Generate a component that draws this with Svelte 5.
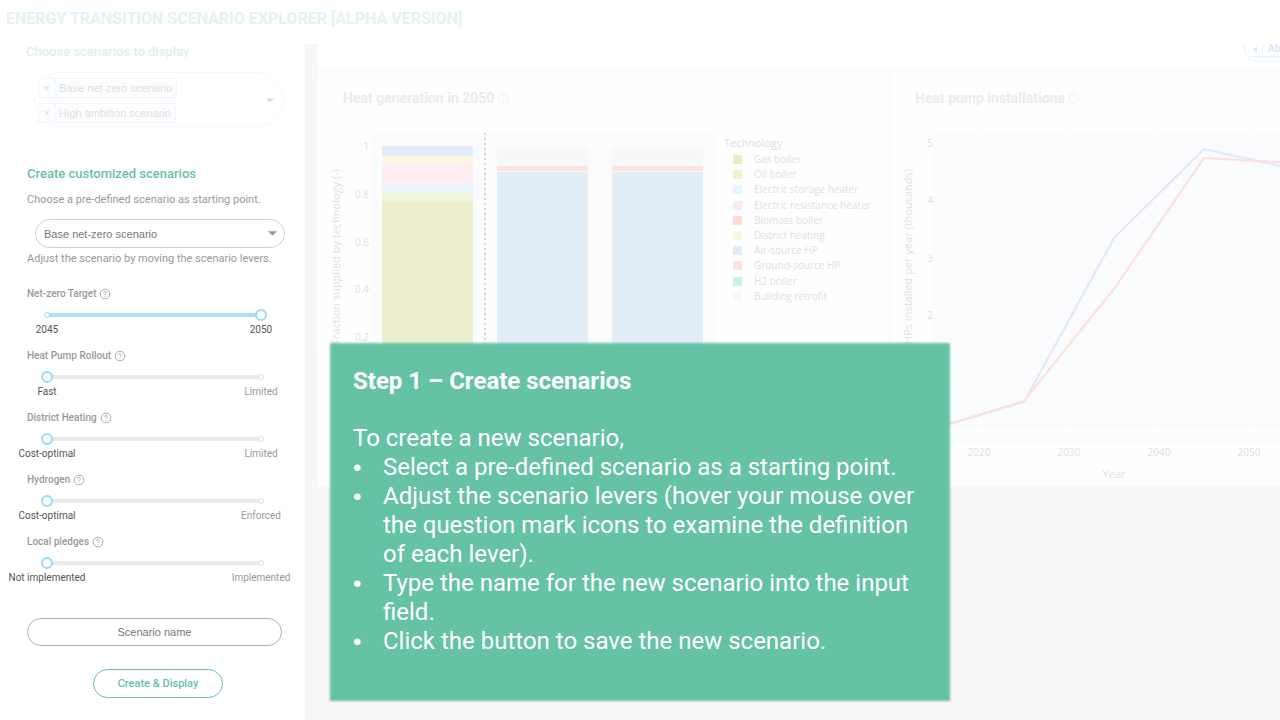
<script>
  let base = $state('Base net-zero scenario');
  let name = $state('');
  let chips = $state(['Base net-zero scenario', 'High ambition scenario']);
  let levers = $state([
    { label: 'Net-zero Target', low: '2045', high: '2050', value: 1, blue: true },
    { label: 'Heat Pump Rollout', low: 'Fast', high: 'Limited', value: 0 },
    { label: 'District Heating', low: 'Cost-optimal', high: 'Limited', value: 0 },
    { label: 'Hydrogen', low: 'Cost-optimal', high: 'Enforced', value: 0 },
    { label: 'Local pledges', low: 'Not implemented', high: 'Implemented', value: 0 }
  ]);

  const legend = [
    ['Gas boiler', '#ebecc9'],
    ['Oil boiler', '#f0f2d6'],
    ['Electric storage heater', '#e6f6fe'],
    ['Electric resistance heater', '#feebef'],
    ['Biomass boiler', '#fddad6'],
    ['District heating', '#f8f8e3'],
    ['Air-source HP', '#e1ecf6'],
    ['Ground-source HP', '#fce3dd'],
    ['H2 boiler', '#c9f2e2'],
    ['Building retrofit', '#f7f7f7']
  ];

  // stacked segments: top, height, colour
  const today = [
    [26, 10, '#e3edf7'],
    [36, 8, '#fbf9e6'],
    [44, 21, '#feecf0'],
    [65, 8, '#e8f7fe'],
    [73, 9, '#f0f4d8'],
    [82, 184, '#edeecd']
  ];
  const future = [
    [26, 20, '#f8f8f8'],
    [46, 5, '#fbe4de'],
    [51, 1, '#fbf9ec'],
    [52, 214, '#e3edf7']
  ];
  const bars = [
    { x: 64, parts: today },
    { x: 179, parts: future },
    { x: 294, parts: future }
  ];
  const shareTicks = [['1', 26], ['0.8', 74], ['0.6', 122], ['0.4', 169], ['0.2', 217]];
  const pumpTicks = [['5', 23], ['4', 80], ['3', 138], ['2', 195]];
  const years = [['2020', 87], ['2030', 177], ['2040', 267], ['2050', 357]];
</script>

{#snippet help()}
  <svg class="help" viewBox="0 0 12 12" aria-hidden="true">
    <circle cx="6" cy="6" r="4.8" />
    <path d="M4.6 4.8a1.4 1.3 0 1 1 2 1.1Q6 6.2 6 6.9M6 8v.8" />
  </svg>
{/snippet}

<div class="page">
  <header><h1>ENERGY TRANSITION SCENARIO EXPLORER [ALPHA VERSION]</h1></header>

  <div class="body">
    <aside>
      <h2 class="pale">Choose scenarios to display</h2>
      <div class="multi">
        <div class="chips">
          {#each chips as chip}
            <div class="chip">
              <button aria-label="Remove {chip}" onclick={() => (chips = chips.filter((c) => c !== chip))}>×</button>
              <span>{chip}</span>
            </div>
          {/each}
        </div>
        <svg class="caret" viewBox="0 0 10 5" aria-hidden="true"><path d="M0 0h10L5 5z" /></svg>
      </div>

      <h2 class="create">Create customized scenarios</h2>
      <label class="note first" for="base">Choose a pre-defined scenario as starting point.</label>
      <div class="select">
        <select id="base" bind:value={base}>
          <option>Base net-zero scenario</option>
          <option>High ambition scenario</option>
        </select>
        <svg class="caret" viewBox="0 0 10 5" aria-hidden="true"><path d="M0 0h10L5 5z" /></svg>
      </div>
      <p class="note">Adjust the scenario by moving the scenario levers.</p>

      <div class="levers">
        {#each levers as lever, i}
          <div class="lever" class:blue={lever.blue}>
            <label for="lever{i}">{lever.label}{@render help()}</label>
            <div class="rail">
              <input id="lever{i}" type="range" min="0" max="1" step="1" bind:value={lever.value} />
            </div>
            <div class="marks">
              <span class:on={lever.value === 0 || lever.blue}>{lever.low}</span>
              <span class:on={lever.value === 1}>{lever.high}</span>
            </div>
          </div>
        {/each}
      </div>

      <input class="name" type="text" aria-label="Scenario name" placeholder="Scenario name" bind:value={name} />
      <button class="save">Create &amp; Display</button>
    </aside>

    <main>
      <div class="toolbar">
        <div class="filter"><div class="tag"><button aria-label="Remove">×</button><span>Ab</span></div></div>
      </div>
      <div class="cards">
        <section>
          <h3>Heat generation in 2050{@render help()}</h3>
          <svg class="chart" role="img" aria-label="Heat generation in 2050">
            <rect x="53" y="13" width="344" height="311" fill="#fafbfd" />
            {#each shareTicks as [text, y]}
              <path d="M53 {y}H397" stroke="#fff" />
              <text class="tick" x="51" y={y + 4} text-anchor="end">{text}</text>
            {/each}
            {#each bars as bar}
              {#each bar.parts as [y, h, fill]}
                <rect x={bar.x} {y} width="91" height={h} {fill} />
              {/each}
            {/each}
            <path d="M167 13V266" stroke="#d2d3d6" stroke-width="2" stroke-dasharray="2 3" />
            <text class="axis" transform="translate(22 49) rotate(-90)" text-anchor="end">Fraction supplied by technology (-)</text>
            <text class="axis" x="406" y="27">Technology</text>
            {#each legend as [text, fill], i}
              <rect x="415" y={35 + Math.round(i * 15.2)} width="9" height="9" {fill} />
              <text class="key" x="436" y={43 + Math.round(i * 15.2)}>{text}</text>
            {/each}
          </svg>
        </section>
        <section>
          <h3>Heat pump installations{@render help()}</h3>
          <svg class="chart" role="img" aria-label="Heat pump installations">
            <rect x="41" y="14" width="100%" height="310" fill="#fafbfd" />
            {#each pumpTicks as [text, y]}
              <path d="M41 {y}H2000" stroke="#fff" />
              <text class="tick" x="41" y={y + 4} text-anchor="end">{text}</text>
            {/each}
            <path d="M41 252H2000" stroke="#fff" />
            <path d="M41 310H2000" stroke="#fff" stroke-width="2" />
            {#each years as [text, x]}
              <path d="M{x} 14V324" stroke="#fff" />
              <text class="tick" {x} y="336" text-anchor="middle">{text}</text>
            {/each}
            <path d="M41 309L132 282L222 118L312 29L402 49" fill="none" stroke="#e4e5fc" stroke-width="2" />
            <path d="M41 309L132 281L222 169L312 38L402 43" fill="none" stroke="#fbdfdc" stroke-width="2" />
            <text class="axis" transform="translate(20 49) rotate(-90)" text-anchor="end">HPs installed per year (thousands)</text>
            <text class="axis" x="222" y="358" text-anchor="middle">Year</text>
          </svg>
        </section>
      </div>

      <div class="guide" role="dialog" aria-labelledby="step">
        <h2 id="step">Step 1 – Create scenarios</h2>
        <p>To create a new scenario,</p>
        <ul>
          <li>Select a pre-defined scenario as a starting point.</li>
          <li>Adjust the scenario levers (hover your mouse over the question mark icons to examine the definition of each lever).</li>
          <li>Type the name for the new scenario into the input field.</li>
          <li>Click the button to save the new scenario.</li>
        </ul>
      </div>
    </main>
  </div>
</div>

<style>
  :global(body) { margin: 0; background: #fff; }
  .page {
    display: flex;
    flex-direction: column;
    min-height: 100vh;
    overflow: hidden;
    font-family: Roboto, sans-serif;
    font-size: 11px;
    color: #999;
  }
  h1, h2, h3, p, ul { margin: 0; }
  button, input, select { font: inherit; box-sizing: border-box; }
  header { padding: 7px 6px 13px; }
  h1 { font-size: 16px; line-height: 24px; font-weight: 700; color: #e3f3ed; }
  .body { display: flex; flex: 1; }

  aside { flex: 0 0 305px; width: 305px; box-sizing: border-box; }
  h2 { font-weight: 500; font-size: 13px; line-height: 16px; color: #66c2a5; }
  .pale { margin-left: 26px; color: #dff1ea; }
  .multi {
    display: flex;
    align-items: center;
    justify-content: space-between;
    margin: 12px 21px 0 34px;
    padding: 4px 9px 3px 3px;
    border: 1px solid #f6f7f8;
    border-radius: 27px;
    min-height: 46px;
  }
  .chips { display: flex; flex-direction: column; gap: 5px; align-items: flex-start; }
  .chip {
    display: flex;
    border: 1px solid #f0f6fc;
    background: #fbfdff;
    font-family: 'Liberation Sans', sans-serif;
    line-height: 18px;
    color: #dedfe1;
  }
  .chip button {
    width: 16px;
    padding: 0;
    border: 0;
    border-right: 1px solid #f0f6fc;
    background: none;
    color: #c9dff5;
    line-height: 18px;
  }
  .chip span { padding: 0 4px; }
  .caret { width: 9px; height: 5px; fill: #999; }
  .multi .caret { width: 8px; fill: #dedede; }
  .create { margin: 39px 0 0 27px; }
  .note { display: block; margin-left: 27px; line-height: 16px; white-space: nowrap; }
  .first { margin-top: 10px; }
  .select { position: relative; margin: 11px 20px 3px 35px; font-family: 'Liberation Sans', sans-serif; }
  .select select {
    display: block;
    appearance: none;
    width: 100%;
    height: 29px;
    padding: 0 24px 0 8px;
    border: 1px solid #cfcfcf;
    border-radius: 15px;
    background: #fff;
    color: #777;
  }
  .select .caret { position: absolute; right: 8px; top: 12px; pointer-events: none; }

  .levers { display: grid; gap: 11px; margin-top: 19px; }
  .lever label {
    display: flex;
    align-items: center;
    margin-left: 27px;
    font-size: 10px;
    line-height: 16px;
    font-weight: 500;
  }
  .help { width: 12px; height: 12px; margin-left: 3px; fill: none; stroke: currentColor; stroke-width: 0.8; }
  .rail {
    --rail: #e9e9e9;
    position: relative;
    height: 16px;
    margin: 5px 38px 0 41px;
    background: linear-gradient(var(--rail), var(--rail)) center / calc(100% - 12px) 4px no-repeat;
  }
  .blue .rail { --rail: #abe2fb; }
  .rail::before, .rail::after {
    content: '';
    position: absolute;
    top: 5px;
    box-sizing: border-box;
    width: 6px;
    height: 6px;
    border: 1px solid #dedede;
    border-radius: 50%;
    background: #fff;
  }
  .blue .rail::before, .blue .rail::after { border-color: #96dbfa; }
  .rail::before { left: 3px; }
  .rail::after { right: 3px; }
  .rail input {
    position: relative;
    z-index: 1;
    display: block;
    appearance: none;
    width: 100%;
    height: 16px;
    margin: 0;
    background: none;
  }
  .rail input::-webkit-slider-runnable-track { height: 12px; background: none; }
  .rail input::-webkit-slider-thumb {
    appearance: none;
    box-sizing: border-box;
    width: 12px;
    height: 12px;
    border: 2px solid #96dbfa;
    border-radius: 50%;
    background: #fff;
  }
  .marks { display: flex; justify-content: space-between; margin-left: 3px; font-size: 10px; line-height: 14px; }
  .marks span { width: 88px; text-align: center; white-space: nowrap; }
  .marks .on { color: #555; }
  .name {
    display: block;
    width: 255px;
    height: 28px;
    margin: 33px 0 0 27px;
    border: 1px solid #b0b0b0;
    border-radius: 14px;
    text-align: center;
    font-family: 'Liberation Sans', sans-serif;
    color: #777;
    background: #fff;
  }
  .name::placeholder { color: #777; opacity: 1; }
  .save {
    display: block;
    width: 130px;
    height: 29px;
    margin: 23px 0 0 93px;
    padding: 0;
    border: 1px solid #66c2a5;
    border-radius: 15px;
    background: #fff;
    color: #66c2a5;
    font-weight: 500;
  }

  main { position: relative; flex: 1; min-width: 0; padding-left: 13px; background: #f7f7f7; }
  .toolbar { display: flex; justify-content: flex-end; height: 25px; background: #fff; overflow: hidden; }
  .filter {
    width: 36px;
    height: 18px;
    box-sizing: border-box;
    padding-left: 4px;
    border: solid #eaf2fd;
    border-width: 0 0 1px 1px;
    border-bottom-left-radius: 14px;
  }
  .tag { display: flex; height: 12px; line-height: 10px; border-bottom: 1px solid #eaf2fd; font-size: 10px; color: #cbdffb; }
  .tag button { flex: none; width: 14px; padding: 0; border: 0; border-right: 1px solid #eaf2fd; background: none; color: inherit; }
  .tag span { padding-left: 5px; }
  .cards { display: grid; grid-template-columns: 570fr 388fr; gap: 4px; padding-top: 4px; background: #fbfbfb; }
  section { min-width: 0; background: #fefefe; }
  h3 {
    display: flex;
    align-items: center;
    padding: 15px 0 12px 25px;
    font-size: 14px;
    line-height: 20px;
    font-weight: 700;
    color: #ebebeb;
  }
  section:last-child h3 { padding-left: 23px; }
  .chart { display: block; width: 100%; height: 366px; font-family: 'Open Sans', sans-serif; }
  .tick { font-size: 10px; fill: #dfe0e3; }
  .axis { font-size: 11px; fill: #dfe0e3; }
  .key { font-size: 10px; fill: #dfe0e3; }

  .guide {
    position: absolute;
    top: 299px;
    left: 25px;
    box-sizing: border-box;
    width: min(620px, calc(100% - 25px));
    padding: 24px 23px 45px;
    color: #fff;
    font-size: 24px;
    line-height: 29px;
  }
  .guide::before {
    content: '';
    position: absolute;
    z-index: -1;
    inset: 0;
    background: #66c2a5;
    filter: blur(1px);
  }
  .guide { isolation: isolate; }
  .guide h2 { margin-bottom: 28px; font-size: 24px; line-height: 29px; font-weight: 700; color: #fff; }
  ul { padding: 0; list-style: none; }
  li { display: flex; }
  li::before { content: '•'; flex: 0 0 30px; font-family: 'Liberation Sans', sans-serif; }
</style>
